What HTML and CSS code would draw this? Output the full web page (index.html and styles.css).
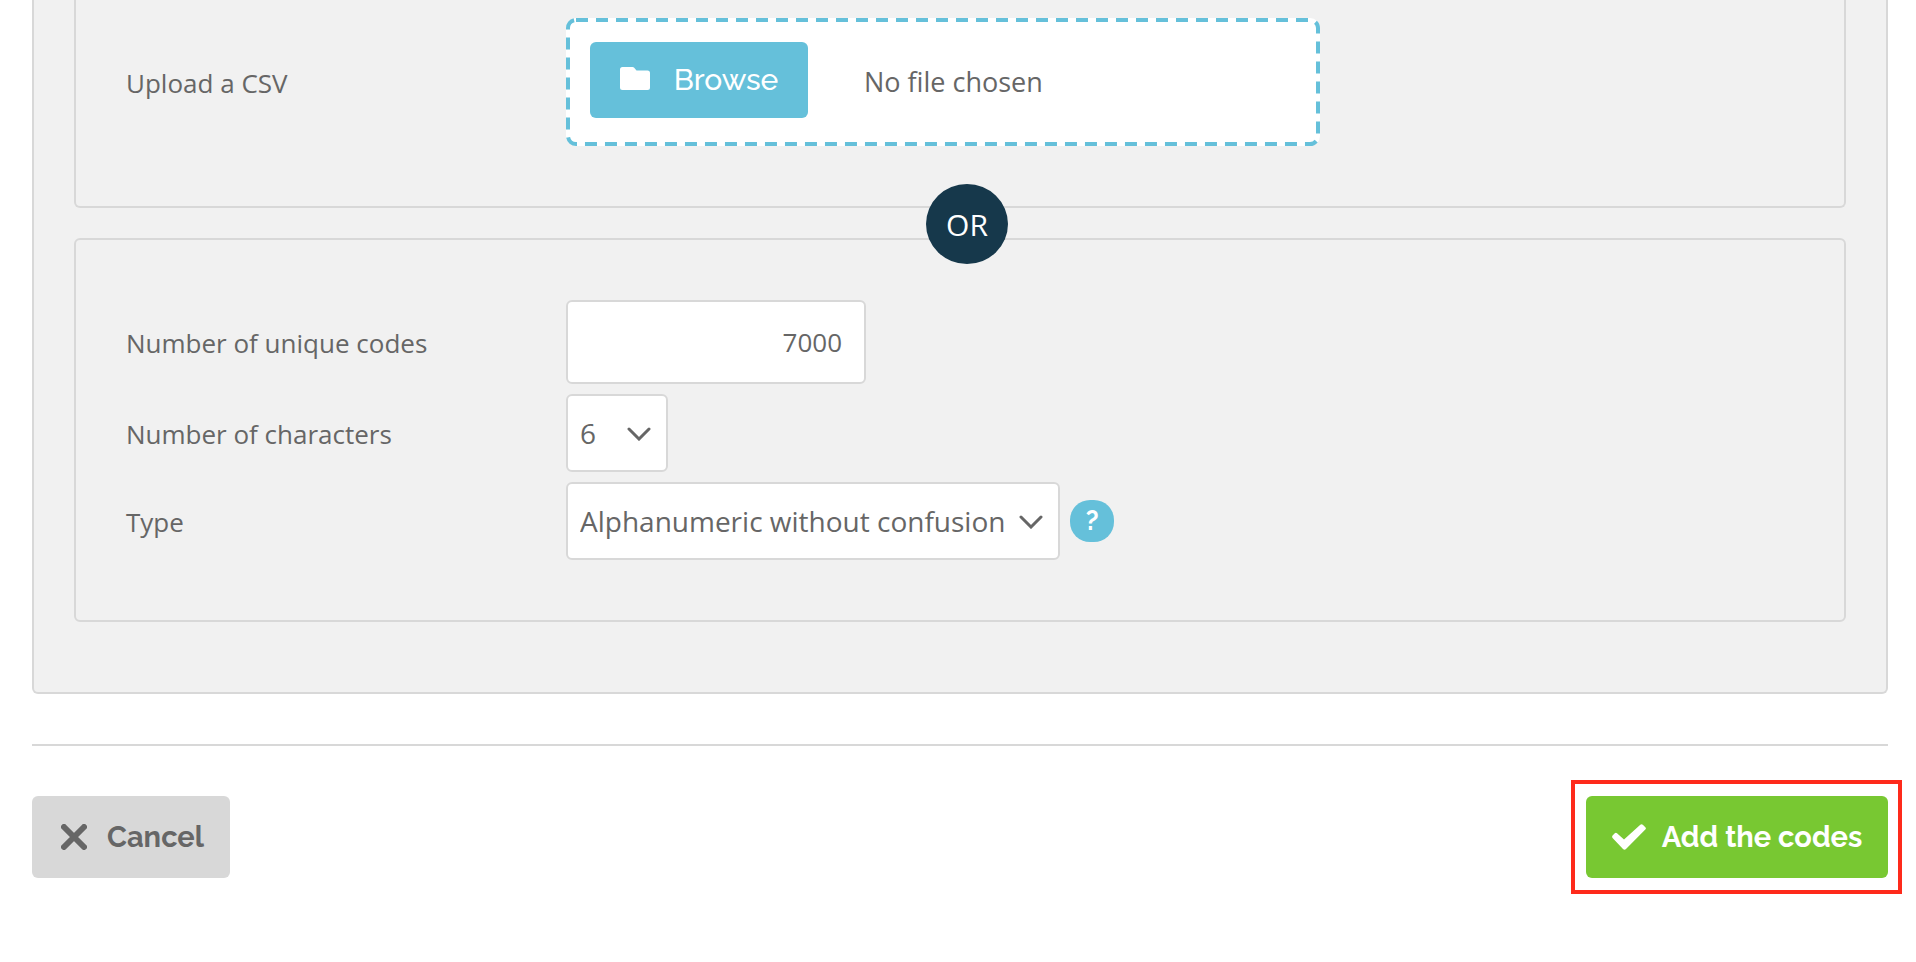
FILE: index.html
```html
<!DOCTYPE html>
<html lang="en">
<head>
<meta charset="utf-8">
<meta name="viewport" content="width=device-width, initial-scale=1">
<title>Add codes</title>
<link rel="stylesheet" href="styles.css">
</head>
<body>
<form class="page">
  <div class="panel">
    <section class="box box-upload">
      <div class="row">
        <label class="label" for="browse">Upload a CSV</label>
        <div class="dropzone">
          <svg class="dashes" aria-hidden="true"><rect x="2" y="2" rx="8"/></svg>
          <button class="browse" id="browse" type="button">
            <svg class="icon-folder" viewBox="0 0 30 26" aria-hidden="true"><path d="M2.500 0H12.500Q13.500 0 14.200.8L16.500 3.500H27.500Q30 3.500 30 6V20.500Q30 23 27.500 23H2.500Q0 23 0 20.500V2.500Q0 0 2.500 0Z"/></svg>
            <span>Browse</span>
          </button>
          <span class="filename">No file chosen</span>
        </div>
      </div>
    </section>
    <div class="divider"><span class="or">OR</span></div>
    <section class="box box-generate">
      <div class="row">
        <label class="label" for="count">Number of unique codes</label>
        <input class="count" id="count" type="text" inputmode="numeric" value="7000">
      </div>
      <div class="row">
        <label class="label" for="chars">Number of characters</label>
        <div class="select select-small">
          <select id="chars"><option>6</option></select>
          <svg class="chevron" viewBox="0 0 24 14" aria-hidden="true"><path d="M2 2L12 12L22 2"/></svg>
        </div>
      </div>
      <div class="row">
        <label class="label" for="type">Type</label>
        <div class="select select-wide">
          <select id="type"><option>Alphanumeric without confusion</option></select>
          <svg class="chevron" viewBox="0 0 24 14" aria-hidden="true"><path d="M2 2L12 12L22 2"/></svg>
        </div>
        <button class="help" type="button">?</button>
      </div>
    </section>
  </div>
  <footer class="actions">
    <button class="action cancel" type="button">
      <svg class="icon-cross" viewBox="0 0 26 26" aria-hidden="true"><path d="M3 3L23 23M23 3L3 23"/></svg>
      <span>Cancel</span>
    </button>
    <div class="highlight">
      <button class="action add" type="submit">
        <svg class="icon-check" viewBox="0 0 34 26" aria-hidden="true"><path d="M.8 11.200L2.800 9.300Q3.900 8.400 5 9.300L12 15.600L28.300.8Q29.500-.4 30.800.8L33.300 3.200Q34.500 4.400 33.300 5.600L14 25Q12.500 26.500 11 25L.8 14.200Q-.6 12.700.8 11.200Z"/></svg>
        <span>Add the codes</span>
      </button>
    </div>
  </footer>
</form>
</body>
</html>
```
FILE: styles.css
```css
* {
  box-sizing: border-box;
}

body {
  margin: 0;
  background: #fff;
  color: #666;
  font-family: "Open Sans", "Noto Sans", sans-serif;
  font-size: 26px;
  line-height: 36px;
}

button,
input,
select {
  margin: 0;
  color: inherit;
  font: inherit;
}

button {
  border: 0;
  cursor: pointer;
}

.page {
  padding: 0 28px 68px 32px;
}

.panel {
  padding: 0 40px 70px;
  border: 2px solid #d8d8d8;
  border-top: 0;
  border-radius: 0 0 6px 6px;
  background: #f1f1f1;
}

.box {
  display: flex;
  flex-direction: column;
  gap: 10px;
  padding: 60px 50px;
  border: 2px solid #d8d8d8;
  border-radius: 6px;
}

.box-upload {
  padding-top: 18px;
  border-top: 0;
  border-radius: 0 0 6px 6px;
}

.row {
  display: flex;
  align-items: center;
}

.label {
  flex: 0 0 440px;
  padding-top: 2px;
}

.dropzone {
  position: relative;
  display: flex;
  flex: 0 1 754px;
  align-items: flex-start;
  height: 128px;
  padding: 24px;
  border-radius: 10px;
  background: #fff;
}

.dashes {
  position: absolute;
  inset: 0;
  width: 100%;
  height: 100%;
  pointer-events: none;
}

.dashes rect {
  width: calc(100% - 4px);
  height: calc(100% - 4px);
  fill: none;
  stroke: #65c0da;
  stroke-width: 4;
  stroke-dasharray: 12 8;
}

.browse {
  display: flex;
  align-items: center;
  justify-content: center;
  gap: 24px;
  width: 218px;
  height: 76px;
  padding: 0;
  border-radius: 6px;
  background: #65c0da;
  color: #fff;
  font-family: Raleway, Lato, sans-serif;
  font-size: 30px;
  font-weight: 500;
}

.icon-folder {
  width: 30px;
  height: 26px;
  fill: currentColor;
}

.filename {
  padding: 22px 0 0 56px;
  font-size: 27px;
}

.divider {
  display: flex;
  align-items: center;
  justify-content: center;
  height: 30px;
  padding-left: 14px;
}

.or {
  z-index: 1;
  flex: none;
  width: 82px;
  height: 80px;
  margin: -24px 0 -26px;
  border-radius: 50%;
  background: #16384b;
  color: #fff;
  font-size: 30px;
  line-height: 82px;
  text-align: center;
}

.count {
  width: 300px;
  height: 84px;
  padding: 0 22px;
  border: 2px solid #d8d8d8;
  border-radius: 6px;
  background: #fff;
  text-align: right;
}

.select {
  position: relative;
  height: 78px;
}

.select-small {
  width: 102px;
}

.select-wide {
  width: 494px;
}

.select select {
  width: 100%;
  height: 100%;
  padding: 0 0 0 12px;
  border: 2px solid #d8d8d8;
  border-radius: 6px;
  background: #fff;
  font-size: 28px;
  appearance: none;
}

.chevron {
  position: absolute;
  top: 33px;
  right: 17px;
  width: 24px;
  height: 14px;
  fill: none;
  stroke: #666;
  stroke-width: 3;
  stroke-linecap: round;
  pointer-events: none;
}

.help {
  width: 44px;
  height: 42px;
  margin-left: 10px;
  padding: 0;
  border-radius: 20px;
  background: #65c0da;
  color: #fff;
  font-family: Raleway, Lato, sans-serif;
  font-size: 27px;
  font-weight: 700;
}

.actions {
  display: flex;
  justify-content: space-between;
  margin-top: 50px;
  padding-top: 50px;
  border-top: 2px solid #d8d8d8;
}

.action {
  display: flex;
  align-items: center;
  justify-content: center;
  height: 82px;
  padding: 0;
  border-radius: 6px;
  font-family: Raleway, Lato, sans-serif;
  font-size: 29px;
  font-weight: 700;
}

.cancel {
  gap: 20px;
  width: 198px;
  padding-left: 3px;
  background: #d8d8d8;
}

.icon-cross {
  width: 26px;
  height: 26px;
  stroke: currentColor;
  stroke-width: 6;
  stroke-linecap: round;
}

.highlight {
  position: relative;
}

.highlight::after {
  position: absolute;
  inset: -16px -14px -16px -15px;
  border: 4px solid #fe2a1b;
  content: "";
  pointer-events: none;
}

.add {
  gap: 16px;
  width: 302px;
  background: #78c832;
  color: #fff;
}

.icon-check {
  width: 34px;
  height: 26px;
  fill: currentColor;
}
```
